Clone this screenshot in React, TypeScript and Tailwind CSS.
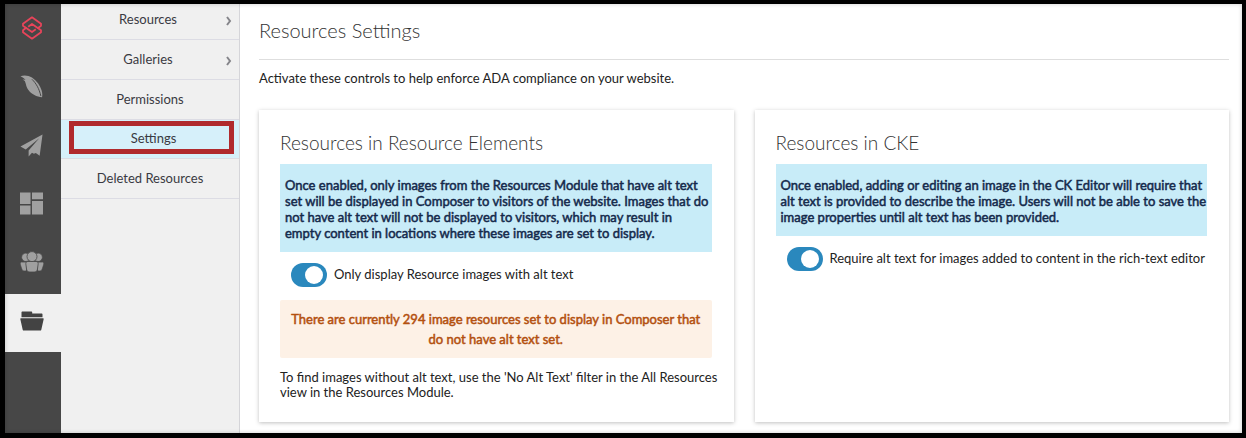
import { useState, type ReactNode } from "react"

const menu = [
  { label: "Resources", children: true },
  { label: "Galleries", children: true },
  { label: "Permissions" },
  { label: "Settings", active: true },
  { label: "Deleted Resources" },
]

function LogoIcon() {
  return (
    <svg viewBox="0 0 22 24" className="w-[22px] h-6" fill="none" stroke="#e8445a" strokeWidth="1.8" strokeLinejoin="round">
      <path d="M16.500 12.500 20 9.800V7.800L11 1.300 2 7.800v2l9 6.200 3.800-2.800" />
      <path d="M5.500 11.500 2 14.200v2l9 6.500 9-6.500v-2L11 8l-3.800 2.800" />
    </svg>
  )
}

function FeatherIcon() {
  return (
    <svg viewBox="0 0 24 24" className="size-[23px]" fill="#a0a0a0">
      <path d="M.5 1.200C4-.2 9 .3 12.500 2.500c5 3.200 8.500 8.500 10 13.500.8 2.500 1 5 .5 7.200-5.500-.2-11-3.200-14-7.200C6.200 12.300 6.300 8.500 5 6.200L2.800 4.800l3 .2C4.200 3.200 2.500 2.200.5 1.200Z" />
      <path d="M12.500 4.500c4 3.800 7.500 9.500 9.300 17.500" fill="none" stroke="#474747" strokeWidth="1" />
    </svg>
  )
}

function PlaneIcon() {
  return (
    <svg viewBox="0 0 24 24" className="size-[23px]" fill="#a0a0a0">
      <path d="M23.500.5.5 13l5.500 3.200L20 4.500 9 17.300v6.200l3.500-4 2 1 2-.8 4 3Z" />
    </svg>
  )
}

function GridIcon() {
  return (
    <svg viewBox="0 0 24 24" className="size-[23px]" fill="#a0a0a0">
      <path d="M0 .5h11v12H0zM12.500 .5H24v7H12.500zM0 14h11v9.500H0zM12.500 9.500H24v14H12.500z" />
    </svg>
  )
}

function UsersIcon() {
  return (
    <svg viewBox="0 0 24 24" className="size-6" fill="#a0a0a0" stroke="#474747" strokeWidth="0.8">
      <circle cx="5.800" cy="7.300" r="4.200" />
      <circle cx="18.200" cy="7.300" r="4.200" />
      <path d="M1.500 12h5v9H4.500c-1.600 0-2.400-.8-2.800-2.300C1 17 .2 14.500 .2 13.500c0-.9.5-1.500 1.300-1.500ZM22.500 12h-5v9h2c1.600 0 2.400-.8 2.800-2.300.7-1.700 1.500-4.200 1.500-5.200 0-.9-.5-1.500-1.300-1.500Z" />
      <path d="M8 11.500h8c1.600 0 2.300.8 2.200 2.200l-.7 5.300c-.2 2-1.500 3-3.300 3H9.800c-1.800 0-3.100-1-3.300-3l-.7-5.300c-.1-1.400.6-2.200 2.200-2.200Z" />
      <circle cx="12" cy="6.600" r="5" />
    </svg>
  )
}

function FolderIcon() {
  return (
    <svg viewBox="0 0 24 24" className="size-6" fill="#434343">
      <path d="M1.500 8.200V3.500c0-.6.400-1 1-1h8.700c.6 0 1 .4 1 1v1.100h9.300c.6 0 1 .4 1 1v2.600Z" />
      <path d="M.9 9.200h22.200c.4 0 .7.300.6.700l-2.400 10.800c-.1.600-.5.900-1.100.9H3.800c-.6 0-1-.3-1.100-.9L.3 9.900c-.1-.4.200-.7.6-.7Z" />
    </svg>
  )
}

const rail = [
  { name: "Home", icon: <LogoIcon /> },
  { name: "Composer", icon: <FeatherIcon /> },
  { name: "Messages", icon: <PlaneIcon /> },
  { name: "Workspace", icon: <GridIcon /> },
  { name: "Users", icon: <UsersIcon /> },
  { name: "Resources", icon: <FolderIcon />, active: true },
]

function Toggle({ id, label }: { id: string; label: string }) {
  const [on, setOn] = useState(true)
  return (
    <div className="flex items-center gap-[7px] pl-[11px]">
      <input
        id={id}
        type="checkbox"
        role="switch"
        checked={on}
        onChange={() => setOn(!on)}
        className="appearance-none shrink-0 w-9 h-6 rounded-full bg-[#9ca3af] checked:bg-[#2a88bd] cursor-pointer flex items-center px-1 before:size-[18px] before:rounded-full before:bg-white checked:before:ml-auto"
      />
      <label htmlFor={id}>{label}</label>
    </div>
  )
}

function Card({ title, info, children }: { title: string; info: string; children: ReactNode }) {
  return (
    <section className="bg-white pl-[21px] pr-[22px] pt-5 pb-[21px] shadow-[0_1px_4px_rgba(0,0,0,0.25)]">
      <h2 className="text-[19px] leading-[26px] font-light text-[#333]">{title}</h2>
      <p className="mt-2 bg-[#c8ecf8] pl-[5px] pt-[13px] pb-[11px] leading-4 text-[#14294b] [-webkit-text-stroke:0.5px_#14294b]">
        {info}
      </p>
      {children}
    </section>
  )
}

export default function App() {
  return (
    <div className="relative min-h-screen flex bg-white border-black border-t-4 border-r-4 border-b-[5px] border-l-[5px] font-['Lato',sans-serif] text-[13px] text-[#222]">
      {/* Icon rail */}
      <nav aria-label="Main" className="w-14 shrink-0 bg-[#474747] overflow-hidden">
        <div className="-mt-[3px] h-[351px] flex flex-col">
          {rail.map((item) => (
            <a
              key={item.name}
              href="#"
              aria-label={item.name}
              className={`flex-1 flex items-center justify-center pb-1 pr-[3px] ${item.active ? "bg-[#f0f0f0]" : ""}`}
            >
              {item.icon}
            </a>
          ))}
        </div>
      </nav>

      {/* Section menu */}
      <aside className="w-[179px] shrink-0 bg-[#f0f0f0] border-r border-[#d5d5d9] overflow-hidden">
        <ul className="-mt-1">
          {menu.map((item) => (
            <li key={item.label} className={`relative border-b border-[#dcdce4] ${item.active ? "bg-[#d6f0fa]" : ""}`}>
              <a
                href="#"
                className={`flex items-center justify-center text-[#3a3a42] ${item.children ? "pr-1" : ""} ${item.active ? "h-[38px] pl-[7px]" : "h-[39px]"}`}
              >
                {item.label}
              </a>
              {item.children && (
                <svg viewBox="0 0 6 10" className="absolute right-[7px] top-4 w-[6px] h-[10px]" fill="none" stroke="#85858a" strokeWidth="2">
                  <path d="M1 1l3 4-3 4" />
                </svg>
              )}
              {item.active && <span className="absolute left-2 right-[5px] top-px bottom-1 border-5 border-[#b02a2d]" />}
            </li>
          ))}
        </ul>
      </aside>

      {/* Content */}
      <main className="flex-1 min-w-0 flex flex-col pl-[19px] pr-[13px] pb-[11px]">
        <h1 className="pt-[13px] pb-4 text-[20px] leading-[26px] font-light text-[#333] border-b border-[#dedede]">
          Resources Settings
        </h1>
        <p className="mt-[10px] leading-4">Activate these controls to help enforce ADA compliance on your website.</p>

        <div className="mt-6 flex-1 grid grid-cols-2 gap-[21px]">
          <Card
            title="Resources in Resource Elements"
            info={"Once enabled, only images from the Resources Module that have alt text set will be displayed in Composer to visitors of the website. Images that do not have alt text will not be displayed to visitors, which may result in empty\u00a0content in locations where these images are set to display."}
          >
            <div className="mt-[11px]">
              <Toggle id="only-alt" label="Only display Resource images with alt text" />
            </div>
            <p className="mt-[13px] rounded-[2px] bg-[#fdf1e6] px-2 py-[9px] text-center leading-5 text-[#b3500f] [-webkit-text-stroke:0.5px_#b3500f]">
              There are currently 294 image resources set to display in Composer that do not have alt text set.
            </p>
            <p className="mt-3 -mr-3 leading-[15px]">
              To find images without alt text, use the 'No Alt Text' filter in the All Resources view in the Resources
              Module.
            </p>
          </Card>
          <Card
            title="Resources in CKE"
            info="Once enabled, adding or editing an image in the CK Editor will require that alt text is provided to describe the image. Users will not be able to save the image properties until alt text has been provided."
          >
            <div className="mt-[11px]">
              <Toggle id="require-alt" label="Require alt text for images added to content in the rich-text editor" />
            </div>
          </Card>
        </div>
      </main>

      <div className="absolute inset-0 pointer-events-none shadow-[inset_0_0_4px_rgba(0,0,0,0.2)]" />
    </div>
  )
}
